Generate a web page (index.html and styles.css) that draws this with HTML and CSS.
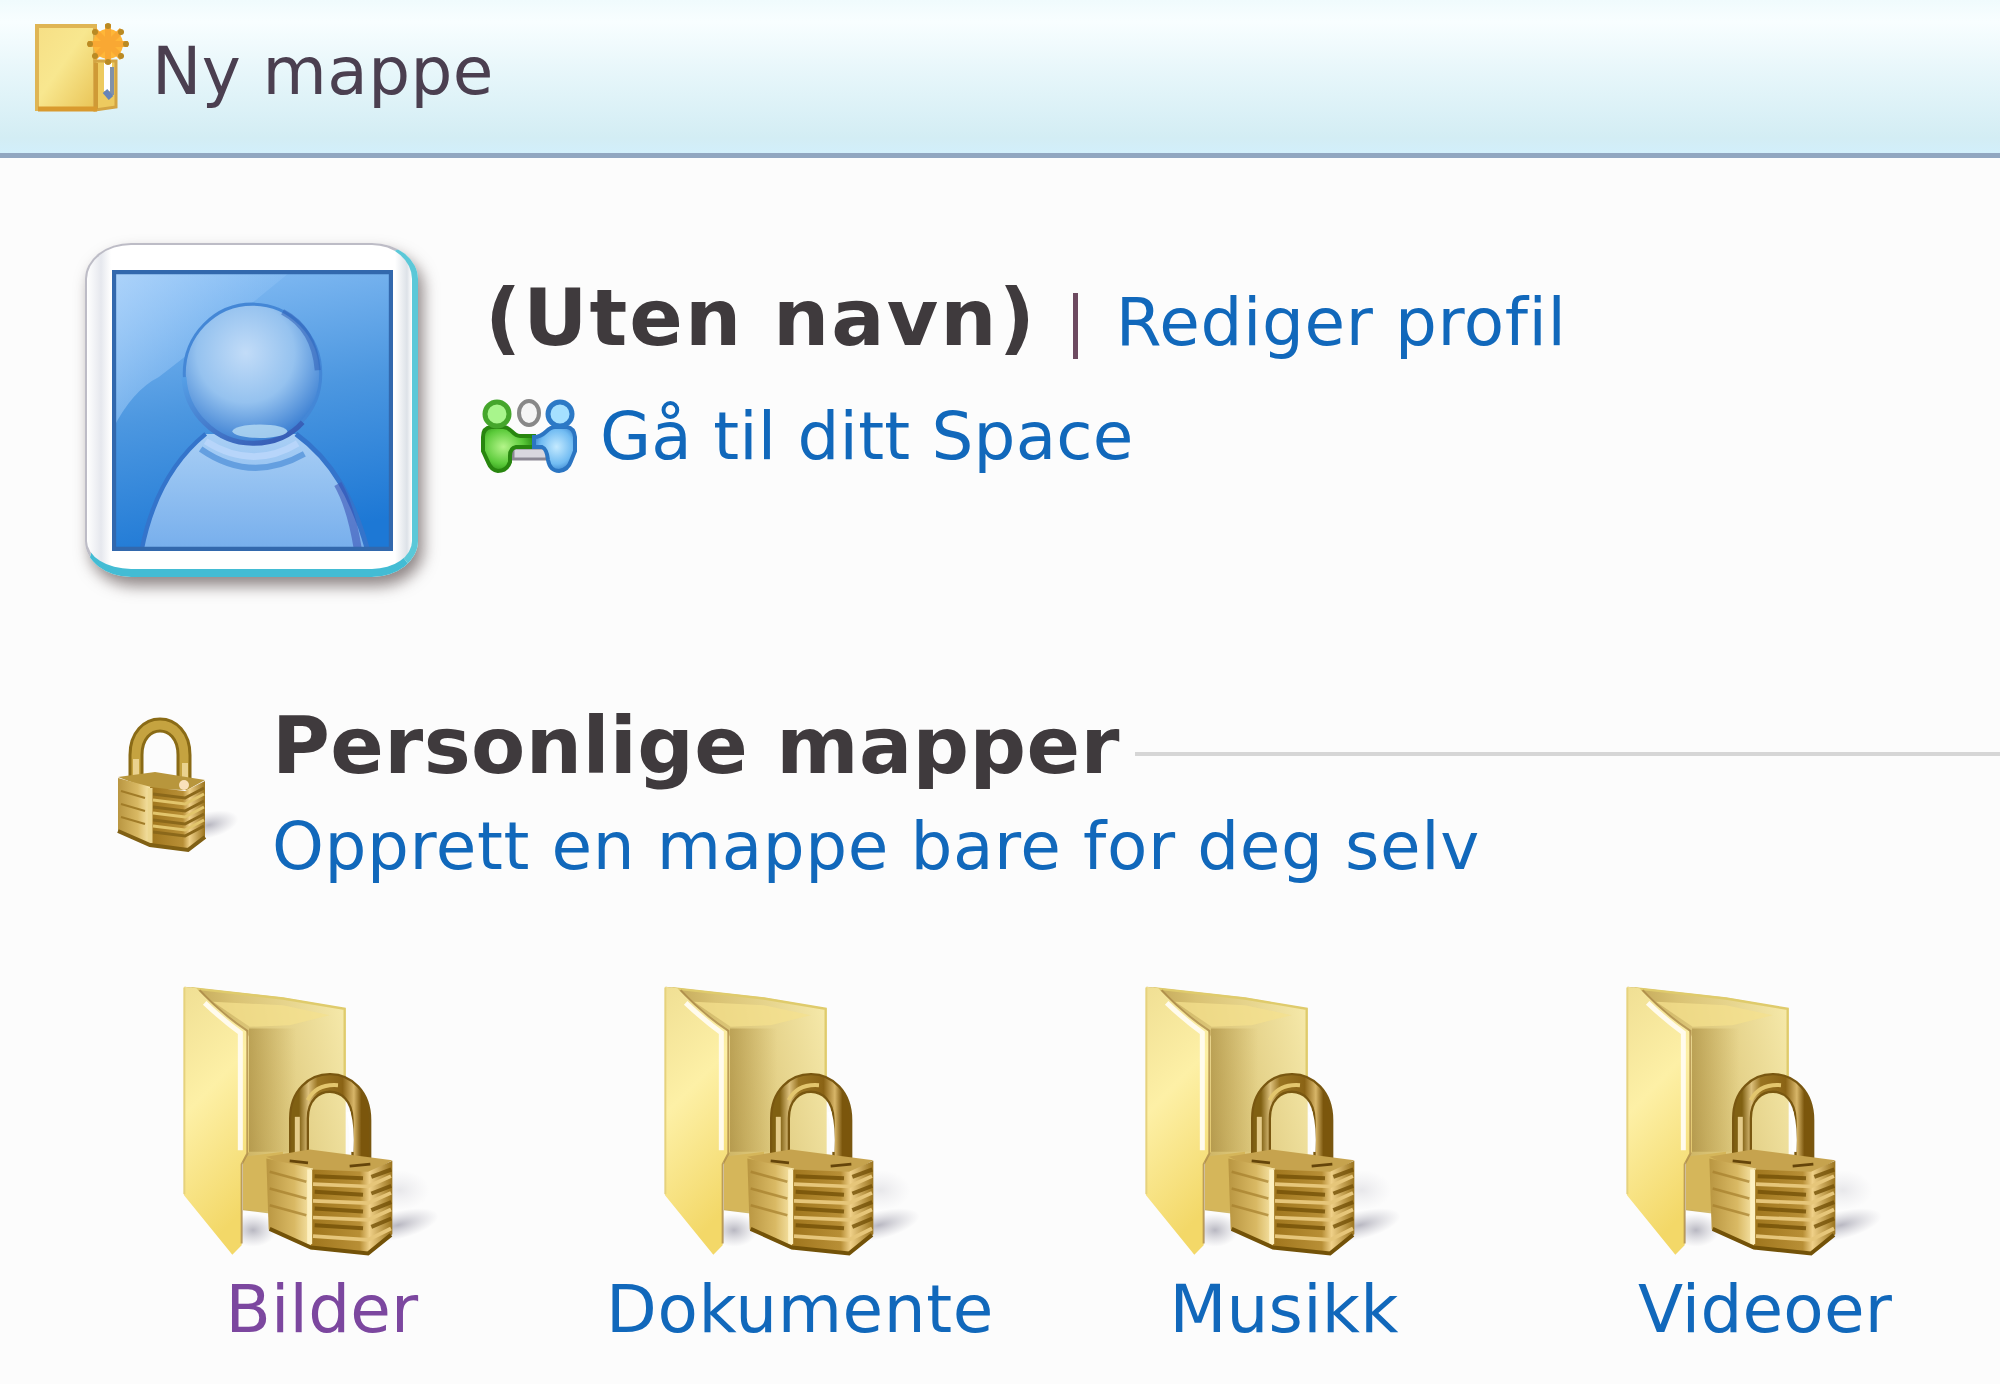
FILE: index.html
```html
<!DOCTYPE html>
<html lang="no">
<head>
<meta charset="utf-8">
<title>Mapper</title>
<link rel="stylesheet" href="styles.css">
</head>
<body>
<svg class="defs" width="0" height="0" aria-hidden="true">
  <defs>
    <linearGradient id="front" x1="0" y1="0" x2="0.25" y2="1"><stop offset="0" stop-color="#f0df94"/><stop offset=".45" stop-color="#fdf0a6"/><stop offset="1" stop-color="#f3d868"/></linearGradient>
    <linearGradient id="back" x1="0" y1="0.3" x2="1" y2="0"><stop offset="0" stop-color="#b99c4c"/><stop offset=".35" stop-color="#d9c273"/><stop offset="1" stop-color="#f7ebad"/></linearGradient>
    <linearGradient id="fold" x1="0" y1="0" x2="1" y2="0"><stop offset="0" stop-color="#9c7f35" stop-opacity=".5"/><stop offset="1" stop-color="#a98b3d" stop-opacity="0"/></linearGradient>
    <linearGradient id="brassL" x1="0" y1="0" x2="1" y2="0"><stop offset="0" stop-color="#b99641"/><stop offset=".6" stop-color="#d9b964"/><stop offset="1" stop-color="#fbeab0"/></linearGradient>
    <linearGradient id="brassR" x1="0" y1="0" x2="1" y2="0"><stop offset="0" stop-color="#a0761d"/><stop offset=".6" stop-color="#b88f36"/><stop offset=".72" stop-color="#efd088"/><stop offset="1" stop-color="#9a731d"/></linearGradient>
    <linearGradient id="shackle" x1="0" y1="0" x2="1" y2="0"><stop offset="0" stop-color="#806012"/><stop offset=".15" stop-color="#dcc07c"/><stop offset=".3" stop-color="#9a7522"/><stop offset=".7" stop-color="#8a6315"/><stop offset=".88" stop-color="#d8b669"/><stop offset="1" stop-color="#7b560c"/></linearGradient>
    <radialGradient id="shade"><stop offset="0" stop-color="#9b9aa8" stop-opacity=".7"/><stop offset="1" stop-color="#b5b4bf" stop-opacity="0"/></radialGradient>
    <symbol id="folder" viewBox="100 75 780 815">
      <ellipse cx="745" cy="795" rx="125" ry="42" fill="url(#shade)" transform="rotate(-14 745 795)"/>
      <ellipse cx="750" cy="690" rx="90" ry="60" fill="url(#shade)" opacity=".3"/>
      <ellipse cx="310" cy="810" rx="70" ry="50" fill="url(#shade)"/>
      <path d="M105 80 L400 112 L588 145 V600 L400 765 L280 750 V215Z" fill="url(#back)"/>
      <path d="M125 84 L400 115 L585 146 V350" fill="none" stroke="#dfcb6c" stroke-width="7"/>
      <path d="M190 125 L400 135 L540 165 L420 195 L300 200Z" fill="#f4e08d" opacity=".75"/>
      <path d="M298 205 H440 V575 H298Z" fill="url(#fold)"/>
      <path d="M280 590 L400 575 V755 L280 748Z" fill="#d5b65a"/>
      <path d="M103 80 L140 84 Q195 145 285 205 L298 230 V575 L276 610 V855 L248 884 L103 705Z" fill="url(#front)"/>
      <path d="M104 82 V702" stroke="#e6d27d" stroke-width="6"/>
      <path d="M165 128 Q220 180 272 218 V570" fill="none" stroke="#fffbed" stroke-width="15"/>
      <path d="M150 90 Q220 165 293 212 V580 L276 612 V850" fill="none" stroke="#ab8948" stroke-width="6" opacity=".8"/>
      <path d="M448 595 V475 C448 332 635 332 635 480 V605" fill="none" stroke="#795710" stroke-width="60"/>
      <path d="M448 595 V475 C448 332 635 332 635 480 V605" fill="none" stroke="url(#shackle)" stroke-width="46"/>
      <path d="M474 420 Q500 370 565 375" fill="none" stroke="#e3c66e" stroke-width="12"/>
      <path d="M443 580 V470" stroke="#e5cc8a" stroke-width="15"/>
      <path d="M596 455 Q609 500 605 575" fill="none" stroke="#fff" stroke-width="13"/>
      <path d="M350 590 L480 568 L728 600 L660 640 L485 650Z" fill="#c6a34e"/>
      <path d="M350 595 L490 625 V870 L357 808Z" fill="url(#brassL)"/>
      <path d="M484 628 L655 635 L728 602 V822 L655 882 L484 866Z" fill="url(#brassR)"/>
      <g fill="none" stroke="#735006" stroke-width="12" opacity=".8">
        <path d="M495 648 L640 654 M495 695 L640 704 M495 745 L640 754 M495 795 L640 804 M665 650 L725 628 M665 700 L725 677 M665 750 L725 726 M665 800 L725 775"/>
      </g>
      <g fill="none" stroke="#e6c67a" stroke-width="11">
        <path d="M490 672 L655 679 L724 648 M490 722 L655 729 L724 698 M490 772 L655 779 L724 748 M490 828 L655 839 L724 805"/>
      </g>
      <path d="M360 635 L470 665 M360 685 L470 715 M360 735 L470 765" fill="none" stroke="#a57f2c" stroke-width="8" opacity=".7"/>
      <path d="M480 628 V852" stroke="#fdf0c0" stroke-width="15"/>
      <path d="M360 806 L484 862 L655 880 L724 824" fill="none" stroke="#735208" stroke-width="12"/>
      <path d="M420 602 L475 608 M600 618 L662 612" stroke="#65450a" stroke-width="8"/>
    </symbol>
  </defs>
</svg>

<header class="toolbar">
  <svg class="new-icon" viewBox="0 0 96 90" width="96" height="90">
    <defs><linearGradient id="nf" x1="0" y1="0" x2="1" y2="1"><stop offset="0" stop-color="#f6df85"/><stop offset=".45" stop-color="#f8e78f"/><stop offset="1" stop-color="#e9c456"/></linearGradient></defs>
    <path d="M2 3 H60 V86 H2Z" fill="url(#nf)" stroke="#dfb554" stroke-width="4"/>
    <path d="M60 38 H81 V84 L60 87Z" fill="#edca5f" stroke="#d3a443" stroke-width="3"/>
    <path d="M73 40 V68" stroke="#fff" stroke-width="8"/>
    <path d="M77 44 V72" stroke="#8191a8" stroke-width="4"/>
    <path d="M70 68 l6 7" stroke="#6784b8" stroke-width="6"/>
    <path d="M61 40 V86" stroke="#cf9a36" stroke-width="4"/>
    <path d="M3 86 H62" stroke="#d99a2e" stroke-width="5"/>
    <circle cx="73" cy="21" r="15" fill="#ffb638"/>
    <g stroke="#f9a833" stroke-width="6"><path d="M73 1 V41 M53 21 H93 M59 7 L87 35 M87 7 L59 35"/></g>
    <g fill="#b98a24"><circle cx="73" cy="3" r="3"/><circle cx="73" cy="39" r="3"/><circle cx="55" cy="21" r="3"/><circle cx="91" cy="21" r="3"/><circle cx="60" cy="9" r="3"/><circle cx="86" cy="9" r="3"/><circle cx="60" cy="33" r="3"/><circle cx="86" cy="33" r="3"/></g>
  </svg>
  <a class="text dark">Ny mappe</a>
</header>

<main>
  <section class="profile">
    <div class="avatar">
      <svg viewBox="160 150 840 840" width="281" height="281">
        <defs>
          <linearGradient id="sky" x1="0.2" y1="0" x2="0.4" y2="1"><stop offset="0" stop-color="#86bdf4"/><stop offset=".5" stop-color="#4c97e0"/><stop offset="1" stop-color="#1d78d5"/></linearGradient>
          <radialGradient id="head" cx=".45" cy=".35" r=".65"><stop offset="0" stop-color="#c2dcf8"/><stop offset=".55" stop-color="#95c2ef"/><stop offset="1" stop-color="#3b7fd2"/></radialGradient>
          <linearGradient id="body" x1="0" y1="0" x2="0" y2="1"><stop offset="0" stop-color="#a9cff5"/><stop offset="1" stop-color="#76aeec"/></linearGradient>
          <linearGradient id="gloss" x1="0" y1="0" x2="1" y2="0.6"><stop offset="0" stop-color="#b6d8fb" stop-opacity=".8"/><stop offset="1" stop-color="#9ccbfb" stop-opacity="0"/></linearGradient>
          <linearGradient id="rim" x1="0" y1="0" x2="1" y2="1"><stop offset="0" stop-color="#559fe6"/><stop offset="1" stop-color="#3355b0"/></linearGradient>
        </defs>
        <path d="M160 150 H1000 V990 H160Z" fill="url(#sky)"/>
        <path d="M160 150 H700 Q430 370 300 470 Q220 510 160 630Z" fill="url(#gloss)"/>
        <path d="M248 990 C275 850 330 730 440 640 H710 C820 720 880 830 925 990Z" fill="url(#body)"/>
        <path d="M248 990 C275 850 330 730 440 640" fill="none" stroke="#3474cb" stroke-width="13"/>
        <path d="M710 640 C820 720 880 830 925 990" fill="none" stroke="#3474cb" stroke-width="15"/>
        <path d="M835 790 Q875 860 895 985" fill="none" stroke="#3e55b5" stroke-width="24" opacity=".6"/>
        <path d="M425 685 Q575 790 735 700" fill="none" stroke="#649fe0" stroke-width="18"/>
        <path d="M440 662 Q580 750 715 668" fill="none" stroke="#b7d5fa" stroke-width="20"/>
        <ellipse cx="580" cy="460" rx="204" ry="208" fill="url(#head)" stroke="#4487d6" stroke-width="9"/>
        <path d="M375 470 C380 575 470 668 580 668 C640 668 690 650 730 605" fill="none" stroke="url(#rim)" stroke-width="15"/>
        <path d="M670 275 Q765 325 775 450" fill="none" stroke="#3260b8" stroke-width="18" opacity=".55"/>
        <ellipse cx="602" cy="632" rx="82" ry="20" fill="#b8dcf4" opacity=".8"/>
        <path d="M166 156 H994 V984 H166Z" fill="none" stroke="#3268ad" stroke-width="13"/>
      </svg>
    </div>
    <div class="identity">
      <div class="name-row">
        <h1 class="heading name">(Uten navn)</h1>
        <span class="pipe"></span>
        <a class="text link edit">Rediger profil</a>
      </div>
      <div class="space-row">
        <svg viewBox="0 0 96 74" width="96" height="74">
          <defs>
            <radialGradient id="gr" cx=".4" cy=".45" r=".65"><stop offset="0" stop-color="#b4f58a"/><stop offset=".6" stop-color="#5bca3a"/><stop offset="1" stop-color="#23860f"/></radialGradient>
            <radialGradient id="bl" cx=".55" cy=".45" r=".65"><stop offset="0" stop-color="#c4eaff"/><stop offset=".6" stop-color="#72bcf2"/><stop offset="1" stop-color="#246fc0"/></radialGradient>
          </defs>
          <ellipse cx="48" cy="14" rx="10" ry="12" fill="#f5f5f5" stroke="#888" stroke-width="4"/>
          <path d="M32 49 H66 V60 H32Z" fill="#d9d6de" stroke="#8c8793" stroke-width="3"/>
          <path d="M10 28 H22 C31 28 31 37 39 37 H53 V48 H35 Q29 49 29 57 V63 Q26 72 17 72 Q10 71 7 63 L2 52 V38 Q2 29 10 28Z" fill="url(#gr)" stroke="#28860f" stroke-width="4"/>
          <path d="M86 28 H74 C65 28 65 38 53 38 V48 H61 Q66 50 67 61 Q69 72 78 72 Q87 71 90 62 L94 52 V38 Q93 29 86 28Z" fill="url(#bl)" stroke="#2b75c2" stroke-width="4"/>
          <circle cx="16" cy="15" r="12" fill="#a8f58c" stroke="#45a62c" stroke-width="5"/>
          <circle cx="79" cy="15" r="12" fill="#a5e0ff" stroke="#2c79c6" stroke-width="5"/>
        </svg>
        <a class="text link">Gå til ditt Space</a>
      </div>
    </div>
  </section>

  <section class="section-head">
    <svg class="lock" viewBox="0 0 122 140" width="122" height="140">
      <ellipse cx="92" cy="110" rx="30" ry="13" fill="url(#shade)" transform="rotate(-14 92 110)"/>
      <path d="M19 66 V40 C19 0 67 0 67 40 V70" fill="none" stroke="#8a6b16" stroke-width="15"/>
      <path d="M19 66 V40 C19 0 67 0 67 40 V70" fill="none" stroke="#c5a340" stroke-width="9"/>
      <path d="M19 64 V44 M68 66 V48" stroke="#ead28e" stroke-width="6"/>
      <path d="M1 62 L38 57 L88 65 L70 75 L33 74Z" fill="#b8963c"/>
      <path d="M1 63 L34 72 V132 L1 116Z" fill="url(#brassL)"/>
      <path d="M33 72 L68 76 L88 66 V122 L71 135 L33 130Z" fill="url(#brassR)"/>
      <path d="M36 79 L68 83 L87 73 M36 92 L68 96 L87 86 M36 105 L68 109 L87 99 M36 117 L68 121 L87 111" fill="none" stroke="#8b681a" stroke-width="3"/>
      <path d="M36 85 L68 89 L87 79 M36 98 L68 102 L87 92 M36 111 L68 115 L87 105" fill="none" stroke="#e2c56c" stroke-width="3"/>
      <path d="M4 76 L28 83 M4 89 L28 96 M4 102 L28 109" stroke="#a17c28" stroke-width="2"/>
      <path d="M33 73 V128" stroke="#ecd68e" stroke-width="5"/>
      <path d="M1 116 L33 130 L71 135 L88 122" fill="none" stroke="#806014" stroke-width="4"/>
      <circle cx="67" cy="70" r="5" fill="#fae1ba"/>
    </svg>
    <div class="section-text">
      <div class="title-row">
        <h2 class="heading">Personlige mapper</h2>
        <span class="rule"></span>
      </div>
      <a class="text link create">Opprett en mappe bare for deg selv</a>
    </div>
  </section>

  <section class="folders">
    <a class="folder link visited"><svg width="260" height="272"><use href="#folder"/></svg><span class="text">Bilder</span></a>
    <a class="folder link"><svg width="260" height="272"><use href="#folder"/></svg><span class="text docs">Dokumente</span></a>
    <a class="folder link"><svg width="260" height="272"><use href="#folder"/></svg><span class="text">Musikk</span></a>
    <a class="folder link"><svg width="260" height="272"><use href="#folder"/></svg><span class="text">Videoer</span></a>
  </section>
</main>
</body>
</html>
```
FILE: styles.css
```css
* { box-sizing: border-box; }

body {
  margin: 0;
  width: 2000px;
  height: 1384px;
  overflow: hidden;
  background: #fcfcfc;
  font-family: "DejaVu Sans", Verdana, sans-serif;
}

svg { display: block; flex: none; }
.defs { height: 0; }

.text {
  font-size: 66px;
  line-height: 80px;
  letter-spacing: .2px;
  white-space: nowrap;
}

.dark { color: #4b3f50; }
.link { color: #1168bb; }
.visited { color: #7c479f; }

.heading {
  margin: 0;
  font-size: 79px;
  font-weight: bold;
  letter-spacing: .4px;
  color: #3f3a3d;
  white-space: nowrap;
}

.toolbar {
  display: flex;
  align-items: flex-start;
  gap: 21px;
  height: 158px;
  padding: 23px 0 0 35px;
  background: linear-gradient(#f0fbfd 0, #f8feff 22px, #e6f6fa 75px, #d3edf4 138px, #d2effb 153px);
  border-bottom: 5px solid #91a6c0;
}

.toolbar .text { line-height: 98px; letter-spacing: .4px; }

.profile {
  display: flex;
  gap: 63px;
  height: 543px;
  padding: 85px 0 0 85px;
}

.avatar {
  width: 333px;
  height: 334px;
  padding: 26px 25px;
  background: linear-gradient(90deg, #fff 0, #e6e8ee 14px, #fff 24px, #fff 308px, #dde2e8 320px, #fff);
  border: 2px solid #bdbcc6;
  border-right: 6px solid #5bc8d8;
  border-bottom: 8px solid #43bcd4;
  border-radius: 46px / 36px;
  box-shadow: 5px 9px 15px rgba(70, 55, 55, .6);
}

.avatar svg { margin: -1px 0 0 0; }

.identity { padding-top: 25px; }

.name-row {
  display: flex;
  align-items: baseline;
  height: 100px;
  padding-left: 4px;
}

.name { line-height: 100px; letter-spacing: 2.1px; }
.edit { letter-spacing: .6px; }

.pipe {
  width: 5px;
  height: 66px;
  margin: 0 38px 0 36px;
  align-self: flex-start;
  position: relative;
  top: 25px;
  background: #6d4a60;
}

.space-row {
  display: flex;
  align-items: center;
  gap: 23px;
  margin-top: 30px;
}

.space-row .text { line-height: 74px; margin-top: 2px; }

.section-head {
  display: flex;
  gap: 33px;
  height: 284px;
  padding-left: 117px;
}

.lock { margin-top: 14px; }
.section-text { flex: 1; }

.title-row {
  display: flex;
  align-items: center;
  gap: 15px;
  height: 90px;
}

.title-row .heading { line-height: 90px; }

.rule {
  flex: 1;
  height: 4px;
  margin-top: 16px;
  background: #d6d6d6;
}

.create { display: block; margin-top: 16px; letter-spacing: .6px; }

.folders {
  display: grid;
  grid-template-columns: repeat(4, 481px);
  margin-left: 83px;
}

.folder {
  display: flex;
  flex-direction: column;
  align-items: center;
}

.folder svg { align-self: flex-start; margin-left: 100px; }
.folder .text { margin: 13px 3px 0 0; }
.folder .docs { margin-right: 9px; letter-spacing: .6px; }
```
